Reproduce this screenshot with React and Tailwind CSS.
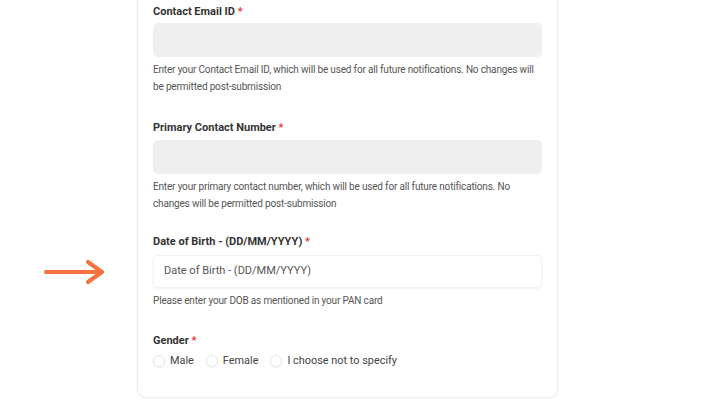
import React from "react";

function Label({ children }) {
  return (
    <p className="text-[11px] leading-[18px] font-bold text-[#333]">
      {children} <span className="text-[#e53935]">*</span>
    </p>
  );
}

function Help({ children }) {
  return (
    <p className="mt-[4px] text-[10px] leading-[17px] tracking-[-0.17px] text-[#555]">
      {children}
    </p>
  );
}

export default function App() {
  return (
    <div
      className="h-[420px] w-[720px] overflow-hidden bg-white"
      style={{ fontFamily: "Roboto, 'Liberation Sans', sans-serif" }}
    >
      <div className="ml-[137px] mt-[-13px] w-[421px] rounded-b-[9px] border border-[#ececec] px-[15px] pt-[15px] pb-[28px] shadow-[0_1px_3px_rgba(0,0,0,0.04)]">
        {/* Contact email */}
        <Label>Contact Email ID</Label>
        <div className="mt-[2px] h-[34px] rounded-[5px] bg-[#efefef]" />
        <Help>
          Enter your Contact Email ID, which will be used for all future
          notifications. No changes will be permitted post-submission
        </Help>

        {/* Primary number */}
        <div className="mt-[24px]">
          <Label>Primary Contact Number</Label>
          <div className="mt-[3px] h-[34px] rounded-[5px] bg-[#efefef]" />
          <Help>
            Enter your primary contact number, which will be used for all
            future notifications. No changes will be permitted post-submission
          </Help>
        </div>

        {/* DOB */}
        <div className="mt-[21px]">
          <Label>Date of Birth - (DD/MM/YYYY)</Label>
          <div className="relative mt-[4px]">
            <div className="flex h-[33px] items-center rounded-[4px] border border-[#f2f2f2] px-[10px] text-[11px] text-[#555] shadow-[0_1px_3px_rgba(0,0,0,0.05)]">
              Date of Birth - (DD/MM/YYYY)
            </div>
            <svg
              className="absolute left-[-109px] top-[5px]"
              width="62"
              height="24"
              viewBox="0 0 62 24"
            >
              <path
                d="M2 12 H58 M44 2 L58 12 L44 22"
                fill="none"
                stroke="#f37440"
                strokeWidth="4"
                strokeLinecap="round"
                strokeLinejoin="round"
              />
            </svg>
          </div>
          <Help>Please enter your DOB as mentioned in your PAN card</Help>
        </div>

        {/* Gender */}
        <div className="mt-[23px]">
          <Label>Gender</Label>
          <div className="mt-[3px] flex items-center gap-[12px] text-[10.9px] leading-[16px] text-[#444]">
            {["Male", "Female", "I choose not to specify"].map((o) => (
              <label key={o} className="flex items-center gap-[5px]">
                <span className="h-[12px] w-[12px] rounded-full border border-[#e6e6e6] shadow-[0_1px_2px_rgba(0,0,0,0.06)]" />
                {o}
              </label>
            ))}
          </div>
        </div>
      </div>
    </div>
  );
}
